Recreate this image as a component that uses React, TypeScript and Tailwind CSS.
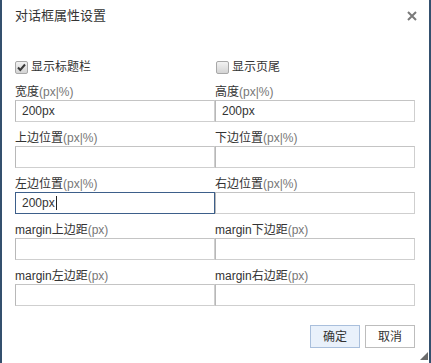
import React from "react";

const font = { fontFamily: '"Liberation Sans", "Noto Sans CJK SC", sans-serif' };

function Label({ main, unit }: { main: string; unit: string }) {
  return (
    <div className="h-[16px] leading-[16px] text-[12px] text-[#333] whitespace-nowrap">
      {main}
      <span className="text-[#777]">{unit}</span>
    </div>
  );
}

function Field({
  main,
  unit,
  value,
  focused,
}: {
  main: string;
  unit: string;
  value?: string;
  focused?: boolean;
}) {
  return (
    <div className="flex flex-col">
      <Label main={main} unit={unit} />
      <div
        className={
          "h-[22px] w-[200px] flex items-center pl-[6px] text-[12px] text-[#333] bg-white border " +
          (focused
            ? "border-[#3d5f8a]"
            : "border-[#cfcfcf] border-l-[#b8b8b8] border-t-[#c4c4c4]")
        }
      >
        {value}
        {focused && <span className="inline-block w-px h-[14px] bg-[#222] ml-px" />}
      </div>
    </div>
  );
}

function CheckBox({ checked }: { checked: boolean }) {
  return (
    <span className="inline-flex w-[13px] h-[13px] rounded-[2px] border border-[#a8a8a8] bg-gradient-to-b from-[#f2f2f2] to-[#d4d4d4] items-center justify-center">
      {checked && (
        <svg width="11" height="11" viewBox="0 0 11 11">
          <path d="M2 5.5 L4.3 8 L9 2.5" fill="none" stroke="#3a3a3a" strokeWidth="2" />
        </svg>
      )}
    </span>
  );
}

export default function App() {
  return (
    <div
      className="w-[431px] h-[363px] bg-white border-l-2 border-r-2 border-[#34506e] relative"
      style={font}
    >
      <div className="h-[32px] flex items-center justify-between pl-[13px] pr-[12px]">
        <span className="text-[13px] text-[#333]">对话框属性设置</span>
        <svg width="10" height="10" viewBox="0 0 10 10">
          <path d="M1 1 L9 9 M9 1 L1 9" stroke="#7a7a7a" strokeWidth="2" />
        </svg>
      </div>
      <div className="pl-[13px] pt-[26px]">
        <div className="grid grid-cols-[200px_200px] h-[16px] items-center">
          <label className="flex items-center gap-[3px] text-[12px] text-[#333]">
            <CheckBox checked />
            <span>显示标题栏</span>
          </label>
          <label className="flex items-center gap-[3px] text-[12px] text-[#333] pl-px">
            <CheckBox checked={false} />
            <span>显示页尾</span>
          </label>
        </div>
        <div className="grid grid-cols-[200px_200px] gap-y-[8px] mt-[10px]">
          <Field main="宽度" unit="(px|%)" value="200px" />
          <Field main="高度" unit="(px|%)" value="200px" />
          <Field main="上边位置" unit="(px|%)" />
          <Field main="下边位置" unit="(px|%)" />
          <Field main="左边位置" unit="(px|%)" value="200px" focused />
          <Field main="右边位置" unit="(px|%)" />
          <Field main="margin上边距" unit="(px)" />
          <Field main="margin下边距" unit="(px)" />
          <Field main="margin左边距" unit="(px)" />
          <Field main="margin右边距" unit="(px)" />
        </div>
        <div className="flex justify-end gap-[5px] w-[400px] mt-[19px]">
          <button className="w-[50px] h-[23px] text-[12px] text-[#333] bg-[#e9f1fb] border border-[#a9bfdc]">
            确定
          </button>
          <button className="w-[50px] h-[23px] text-[12px] text-[#333] bg-white border border-[#bdbdbd]">
            取消
          </button>
        </div>
      </div>
      <svg
        className="absolute right-[1px] bottom-[3px]"
        width="8"
        height="8"
        viewBox="0 0 8 8"
      >
        <path d="M8 0 L8 8 L0 8 Z" fill="#6b6b6b" />
      </svg>
    </div>
  );
}
